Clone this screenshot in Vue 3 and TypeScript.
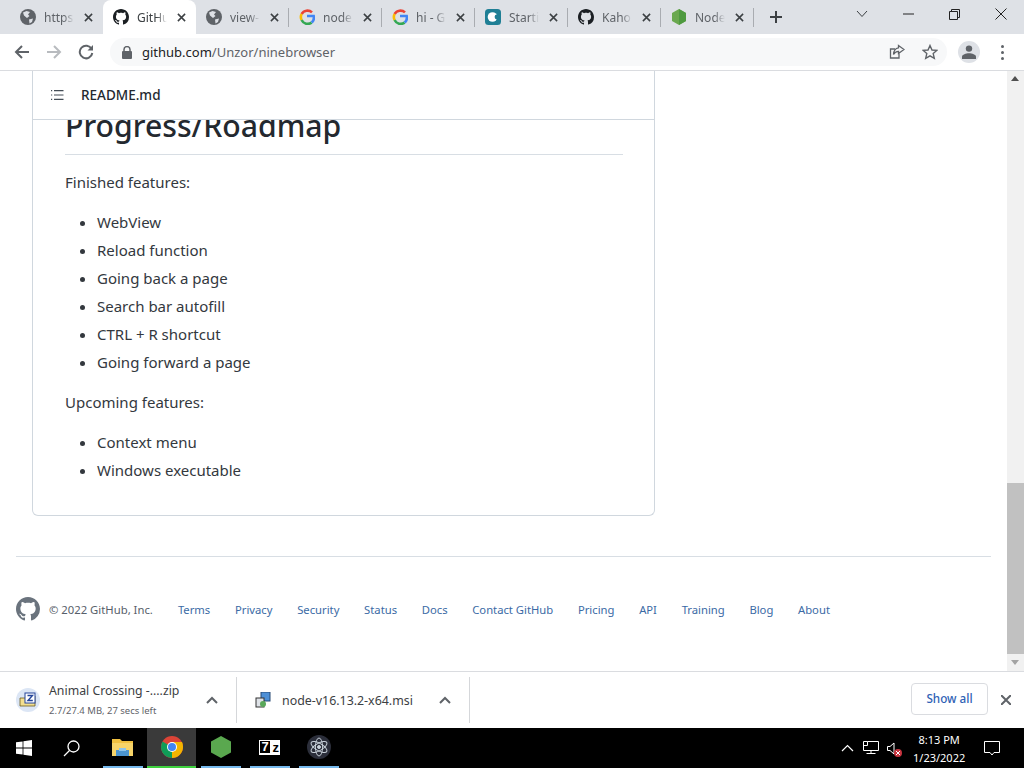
<script setup lang="ts">
type Tab = { icon: string; title: string; active?: boolean }

const tabs: Tab[] = [
  { icon: 'globe', title: 'https' },
  { icon: 'github', title: 'GitHu', active: true },
  { icon: 'globe', title: 'view-' },
  { icon: 'google', title: 'node' },
  { icon: 'google', title: 'hi - G' },
  { icon: 'cloud', title: 'Starti' },
  { icon: 'github', title: 'Kaho' },
  { icon: 'node', title: 'Node' },
]

const finished = ['WebView', 'Reload function', 'Going back a page', 'Search bar autofill', 'CTRL + R shortcut', 'Going forward a page']
const upcoming = ['Context menu', 'Windows executable']
const links = ['Terms', 'Privacy', 'Security', 'Status', 'Docs', 'Contact GitHub', 'Pricing', 'API', 'Training', 'Blog', 'About']
const githubMark = 'M8 0C3.58 0 0 3.58 0 8c0 3.54 2.29 6.53 5.47 7.59.4.07.55-.17.55-.38 0-.19-.01-.82-.01-1.49-2.01.37-2.53-.49-2.69-.94-.09-.23-.48-.94-.82-1.13-.28-.15-.68-.52-.01-.53.63-.01 1.08.58 1.23.82.72 1.21 1.87.87 2.33.66.07-.52.28-.87.51-1.07-1.78-.2-3.64-.89-3.64-3.95 0-.87.31-1.59.82-2.15-.08-.2-.36-1.02.08-2.12 0 0 .67-.21 2.2.82.64-.18 1.32-.27 2-.27.68 0 1.36.09 2 .27 1.53-1.04 2.2-.82 2.2-.82.44 1.1.16 1.92.08 2.12.51.56.82 1.27.82 2.15 0 3.07-1.87 3.75-3.65 3.95.29.25.54.73.54 1.48 0 1.07-.01 1.93-.01 2.2 0 .21.15.46.55.38A8.013 8.013 0 0016 8c0-4.42-3.58-8-8-8z'
</script>

<template>
  <div class="window">
    <div class="tabstrip">
      <div v-for="(t, i) in tabs" :key="i" class="tab" :class="{ active: t.active, sep: i >= 2 }">
        <svg v-if="t.icon === 'globe'" class="favicon" viewBox="0 0 16 16">
          <circle cx="8" cy="8" r="8" fill="#5f6368" />
          <path d="M3 3.5 6.5 2 10 3 8 5.5 9.5 7 7 9 4 6.5ZM9 10.5 13 9.5 12 13 9.5 14.5Z" fill="#dee1e6" />
        </svg>
        <svg v-else-if="t.icon === 'github'" class="favicon" viewBox="0 0 16 16"><path :d="githubMark" fill="#1b1f23" /></svg>
        <svg v-else-if="t.icon === 'google'" class="favicon" viewBox="0 0 16 16" fill="none" stroke-width="2.6">
          <path d="M13 3.4A6.7 6.7 0 0 0 2.6 5" stroke="#ea4335" />
          <path d="M2.6 5a6.7 6.7 0 0 0 0 6" stroke="#fbbc05" />
          <path d="M2.6 11a6.7 6.7 0 0 0 10 2.6" stroke="#34a853" />
          <path d="M12.6 13.6A6.7 6.7 0 0 0 14.7 7H8" stroke="#4285f4" />
        </svg>
        <svg v-else-if="t.icon === 'cloud'" class="favicon" viewBox="0 0 16 16">
          <rect width="16" height="16" rx="3.5" fill="#1f7f95" />
          <circle cx="7.5" cy="8" r="4.8" fill="#fff" />
          <circle cx="12" cy="8" r="2.4" fill="#1f7f95" />
        </svg>
        <svg v-else class="favicon" viewBox="0 0 16 16">
          <path d="M8 0 15 4V12L8 16 1 12V4Z" fill="#6aa84f" />
          <path d="M8 0 15 4V12L8 16Z" fill="#4e9a3f" />
        </svg>
        <span class="tab-title">{{ t.title }}</span>
        <svg class="tab-close" viewBox="0 0 10 10"><path d="M1 1 9 9M9 1 1 9" stroke="#3c4043" stroke-width="1.7" /></svg>
      </div>
      <div class="new-tab">
        <svg width="14" height="14" viewBox="0 0 14 14"><path d="M7 1V13M1 7H13" stroke="#3c4043" stroke-width="2" /></svg>
      </div>
      <div class="window-btns">
        <svg class="win-chevron" width="12" height="8" viewBox="0 0 12 8"><path d="M1 1 6 6.5 11 1" fill="none" stroke="#3c4043" /></svg>
        <svg class="win-min" width="11" height="2" viewBox="0 0 11 2"><path d="M0 1H11" stroke="#222" /></svg>
        <svg class="win-max" width="11" height="11" viewBox="0 0 11 11" fill="none" stroke="#222"><path d="M.5 2.5h8v8h-8zM2.5 2.5v-2h8v8h-2" /></svg>
        <svg class="win-close" width="12" height="12" viewBox="0 0 12 12"><path d="M.5.5 11.5 11.5M11.5.5.5 11.5" stroke="#222" /></svg>
      </div>
    </div>

    <div class="toolbar">
      <svg class="nav" viewBox="0 0 16 16"><path d="M15 8H2M8 2 2 8 8 14" fill="none" stroke="#5f6368" stroke-width="2" /></svg>
      <svg class="nav" viewBox="0 0 16 16"><path d="M1 8H14M8 2 14 8 8 14" fill="none" stroke="#b8bbbf" stroke-width="2" /></svg>
      <svg class="nav" viewBox="0 0 16 16"><path d="M13.6 5A6.3 6.3 0 1 0 14.3 9" fill="none" stroke="#5f6368" stroke-width="2" /><path d="M15 1V6.5H9.5Z" fill="#5f6368" /></svg>
      <div class="omnibox">
        <svg class="lock" width="10" height="13" viewBox="0 0 10 13"><path d="M2 5.5V3.6a3 3 0 0 1 6 0V5.5" fill="none" stroke="#5f6368" stroke-width="1.5" /><rect y="5" width="10" height="8" rx="1" fill="#5f6368" /></svg>
        <span class="url"><b>github.com</b>/Unzor/ninebrowser</span>
        <svg class="omni-icon" width="16" height="16" viewBox="0 0 16 16" fill="none" stroke="#5f6368" stroke-width="1.3"><path d="M10 9.5V14H1.5V5H6" /><path d="M9.5 1.5 15 5.5 9.5 9.5V7.3C7 7.3 5.5 8.5 4.5 10.5 4.7 7 6.5 4.2 9.5 3.8Z" /></svg>
        <svg class="omni-icon star" width="16" height="16" viewBox="0 0 16 16"><path d="M8 1.5 10 6 14.8 6.4 11.2 9.6 12.3 14.3 8 11.8 3.7 14.3 4.8 9.6 1.2 6.4 6 6Z" fill="none" stroke="#5f6368" stroke-width="1.4" /></svg>
      </div>
      <div class="avatar">
        <svg width="14" height="14" viewBox="0 0 14 14"><circle cx="7" cy="3.6" r="3.2" fill="#5f6368" /><path d="M0 14V11.5C0 9.5 4 8.2 7 8.2S14 9.5 14 11.5V14Z" fill="#5f6368" /></svg>
      </div>
      <div class="dots"><i></i><i></i><i></i></div>
    </div>

    <div class="viewport">
      <main class="page">
        <div class="readme">
          <div class="readme-head">
            <svg width="16" height="16" viewBox="0 0 16 16" fill="#444d56"><path d="M2 3h1.2v1.2H2zM2 7.4h1.2v1.2H2zM2 11.8h1.2V13H2zM5 3h9.5v1.2H5zM5 7.4h9.5v1.2H5zM5 11.8h9.5V13H5z" /></svg>
            <span>README.md</span>
          </div>
          <article class="markdown">
            <h2>Progress/Roadmap</h2>
            <p>Finished features:</p>
            <ul>
              <li v-for="item in finished" :key="item">{{ item }}</li>
            </ul>
            <p>Upcoming features:</p>
            <ul>
              <li v-for="item in upcoming" :key="item">{{ item }}</li>
            </ul>
          </article>
        </div>
        <footer class="footer">
          <svg width="24" height="24" viewBox="0 0 16 16"><path :d="githubMark" fill="#6a737d" /></svg>
          <span class="copy">© 2022 GitHub, Inc.</span>
          <nav class="links">
            <a v-for="l in links" :key="l">{{ l }}</a>
          </nav>
        </footer>
      </main>
      <div class="scrollbar">
        <div class="arrow up"></div>
        <div class="track"><div class="thumb"></div></div>
        <div class="arrow down"></div>
      </div>
    </div>

    <div class="shelf">
      <div class="download first">
        <span class="zip-icon">
          <svg width="24" height="24" viewBox="0 0 24 24">
            <circle cx="12" cy="12" r="12" fill="#dce6f5" />
            <path d="M4 10H10V8H19V18H4Z" fill="#f3df8f" stroke="#6b5a20" stroke-width=".8" />
            <rect x="9" y="5" width="10" height="10" fill="#fff" stroke="#24459a" />
            <path d="M11.5 7.5H16.5L12 12.5H16.8" fill="none" stroke="#24459a" stroke-width="1.4" />
          </svg>
        </span>
        <div class="dl-text">
          <div class="dl-name">Animal Crossing -....zip</div>
          <div class="dl-status">2.7/27.4 MB, 27 secs left</div>
        </div>
        <svg class="dl-chevron" width="12" height="8" viewBox="0 0 12 8"><path d="M1 7 6 2 11 7" fill="none" stroke="#5f6368" stroke-width="2" /></svg>
      </div>
      <div class="download second">
        <svg width="16" height="16" viewBox="0 0 16 16">
          <rect x="6" y="0" width="9" height="9" fill="#4d8fd6" stroke="#284a75" />
          <rect x="1" y="6" width="8" height="9" fill="#dfe3e8" stroke="#333" />
          <circle cx="8" cy="12" r="3" fill="#5aa85a" />
        </svg>
        <span class="dl-file">node-v16.13.2-x64.msi</span>
        <svg class="dl-chevron" width="12" height="8" viewBox="0 0 12 8"><path d="M1 7 6 2 11 7" fill="none" stroke="#5f6368" stroke-width="2" /></svg>
      </div>
      <button class="show-all">Show all</button>
      <svg class="shelf-close" width="10" height="10" viewBox="0 0 10 10"><path d="M0 0 10 10M10 0 0 10" stroke="#5f6368" stroke-width="2" /></svg>
    </div>

    <div class="taskbar">
      <div class="task start">
        <svg width="16" height="16" viewBox="0 0 16 16" fill="#fff"><path d="M0 2.3 6.6 1.4V7.6H0ZM7.4 1.3 16 0V7.6H7.4ZM0 8.4H6.6V14.6L0 13.7ZM7.4 8.4H16V16L7.4 14.7Z" /></svg>
      </div>
      <div class="task search">
        <svg width="17" height="17" viewBox="0 0 17 17" fill="none" stroke="#fff" stroke-width="1.3"><circle cx="10.5" cy="6.5" r="5.5" /><path d="M6.5 10.5 1 16" /></svg>
      </div>
      <div class="task pin">
        <svg width="21" height="18" viewBox="0 0 21 18">
          <path d="M0 1H8L10 3H21V18H0Z" fill="#f0c040" />
          <rect y="5" width="21" height="13" fill="#f7d469" />
          <rect x="4" y="12" width="13" height="6" fill="#4b94cf" />
          <rect x="7" y="10" width="7" height="3" fill="#8fc4ea" />
        </svg>
      </div>
      <div class="task pin chrome">
        <svg width="22" height="22" viewBox="0 0 22 22">
          <circle cx="11" cy="11" r="11" fill="#db4437" />
          <path d="M11 11 1.5 5.5A11 11 0 0 0 11 22Z" fill="#0f9d58" />
          <path d="M11 11H22A11 11 0 0 1 11 22Z" fill="#f4b400" />
          <path d="M11 6H21A11 11 0 0 1 22 11H11Z" fill="#f4b400" />
          <circle cx="11" cy="11" r="5" fill="#fff" />
          <circle cx="11" cy="11" r="4" fill="#4285f4" />
        </svg>
      </div>
      <div class="task pin">
        <svg width="20" height="22" viewBox="0 0 20 22"><path d="M10 0 20 5.5V16.5L10 22 0 16.5V5.5Z" fill="#5aa84f" /></svg>
      </div>
      <div class="task pin">
        <div class="sevenz"><b class="seven">7</b><b>z</b></div>
      </div>
      <div class="task pin">
        <svg width="24" height="24" viewBox="0 0 24 24" fill="none" stroke="#c7d0d8">
          <circle cx="12" cy="12" r="12" fill="#2b2e3a" stroke="none" />
          <ellipse cx="12" cy="12" rx="9" ry="3.6" transform="rotate(30 12 12)" />
          <ellipse cx="12" cy="12" rx="9" ry="3.6" transform="rotate(90 12 12)" />
          <ellipse cx="12" cy="12" rx="9" ry="3.6" transform="rotate(150 12 12)" />
          <circle cx="12" cy="12" r="1.5" fill="#c7d0d8" />
        </svg>
      </div>
      <div class="tray">
        <svg width="13" height="8" viewBox="0 0 13 8"><path d="M1 7 6.5 1.5 12 7" fill="none" stroke="#fff" stroke-width="1.2" /></svg>
        <svg class="tray-net" width="16" height="14" viewBox="0 0 16 14" fill="none" stroke="#fff"><path d="M4.5.5h11v9H.5v-9h4v4h-4M8 9.5v3M3.5 12.5h9" /></svg>
        <span class="sound">
          <svg width="10" height="13" viewBox="0 0 10 13" fill="none" stroke="#fff"><path d="M.5 4.5h2.5l4-3.5v11l-4-3.5h-2.500z" /></svg>
          <svg class="muted" width="8" height="8" viewBox="0 0 8 8"><circle cx="4" cy="4" r="4" fill="#c8343f" /><path d="M2 2 6 6M6 2 2 6" stroke="#fff" /></svg>
        </span>
        <div class="clock"><div>8:13 PM</div><div>1/23/2022</div></div>
        <svg class="notify" width="16" height="15" viewBox="0 0 16 15" fill="none" stroke="#fff"><path d="M.5.5h15v11H10L8 14 6 11.5H.5z" /></svg>
      </div>
    </div>
  </div>
</template>

<style scoped>
.window {
  width: 1024px; height: 768px; overflow: hidden;
  display: flex; flex-direction: column;
  font-family: "Noto Sans", "Open Sans", sans-serif;
  background: #fff; color: #24292f;
}

.tabstrip { height: 34px; flex: none; display: flex; align-items: center; background: #dee1e6; padding-left: 10px; }
.tab { position: relative; width: 93px; height: 34px; flex: none; box-sizing: border-box; padding: 0 0 0 10px; display: flex; align-items: center; font-size: 12px; color: #5f6368; }
.tab.active { background: #fff; color: #3c4043; border-radius: 8px 8px 0 0; }
.tab.sep::after { content: ""; position: absolute; right: 0; top: 8px; width: 1px; height: 19px; background: #a9acb1; }
.favicon { width: 16px; height: 16px; flex: none; }
.tab-title { margin-left: 8px; width: 30px; flex: none; white-space: nowrap; -webkit-mask-image: linear-gradient(90deg, #000 65%, transparent); mask-image: linear-gradient(90deg, #000 65%, transparent); }
.tab-close { width: 9px; height: 9px; margin-left: 10px; flex: none; }
.new-tab { width: 29px; height: 34px; display: flex; align-items: center; justify-content: flex-end; flex: none; }
.window-btns { margin-left: auto; margin-right: 4px; align-self: flex-start; width: 190px; height: 28px; display: flex; align-items: center; }
.win-chevron { margin-left: 26px; }
.win-min { margin-left: 35px; }
.win-max { margin-left: 35px; }
.win-close { margin-left: 35px; }

.toolbar { height: 37px; flex: none; box-sizing: border-box; display: flex; align-items: center; padding-left: 14px; background: #fff; border-bottom: 1px solid #dadce0; }
.nav { width: 16px; height: 16px; flex: none; margin-right: 16px; }
.omnibox { width: 837px; height: 28px; flex: none; box-sizing: border-box; display: flex; align-items: center; padding: 0 9px 0 12px; border-radius: 14px; background: #f7f8f9; }
.lock { margin-right: 10px; flex: none; }
.url { font-size: 13px; color: #5f6368; flex: 1; }
.url b { font-weight: 400; color: #202124; }
.omni-icon { flex: none; margin-left: 17px; }
.avatar { width: 22px; height: 22px; margin-left: 11px; border-radius: 50%; background: #dee1e6; display: flex; align-items: center; justify-content: center; flex: none; }
.dots { margin-left: 21px; display: flex; flex-direction: column; gap: 3px; }
.dots i { width: 3px; height: 3px; border-radius: 50%; background: #5f6368; }

.viewport { flex: 1; min-height: 0; display: flex; overflow: hidden; }
.page { width: 1007px; flex: none; box-sizing: border-box; padding: 0 16px; }
.readme { width: 623px; box-sizing: border-box; margin-left: 16px; height: 445px; border: 1px solid #d0d7de; border-top: 0; border-radius: 0 0 6px 6px; }
.readme-head { position: relative; z-index: 1; height: 49px; box-sizing: border-box; display: flex; align-items: center; gap: 16px; padding-left: 16px; background: #fff; border-bottom: 1px solid #d0d7de; font-size: 13.5px; font-weight: 500; color: #24292f; }
.markdown { padding: 0 32px; margin-right: -1px; color: #33383e; }
.markdown h2 { margin: -14px 0 0; height: 49px; box-sizing: border-box; border-bottom: 1px solid #d8dee4; font-size: 30.2px; line-height: 40px; font-weight: 500; color: #24292f; }
.markdown p { margin: 16px 0 0; font-size: 15px; line-height: 24px; }
.markdown h2 + p { margin-top: 15px; }
.markdown ul { margin: 16px 0 0; padding-left: 32px; font-size: 15px; }
.markdown li { line-height: 24px; margin-top: 4px; }
.markdown li:first-child { margin-top: 0; }

.footer { margin-top: 40px; padding-top: 40px; border-top: 1px solid #d8dee4; display: flex; align-items: center; height: 24px; width: 975px; }
.copy { margin-left: 9px; font-size: 11.3px; color: #57606a; white-space: nowrap; }
.links { margin-left: 25px; display: flex; gap: 24.7px; font-size: 11.25px; color: #3b6aa5; white-space: nowrap; }

.scrollbar { width: 17px; flex: none; background: #f1f1f1; display: flex; flex-direction: column; }
.arrow { height: 17px; flex: none; position: relative; }
.arrow::after { content: ""; position: absolute; left: 4px; border-left: 4px solid transparent; border-right: 4px solid transparent; }
.arrow.up::after { top: 5px; border-bottom: 5px solid #505050; }
.arrow.down::after { top: 6px; border-top: 5px solid #a3a3a3; }
.track { flex: 1; display: flex; flex-direction: column; justify-content: flex-end; }
.thumb { height: 171px; background: #c1c1c1; }

.shelf { height: 57px; flex: none; box-sizing: border-box; display: flex; align-items: center; background: #fff; border-top: 1px solid #dadce0; }
.download { height: 46px; flex: none; box-sizing: border-box; display: flex; align-items: center; border-right: 1px solid #d5d7da; position: relative; }
.download.first { width: 237px; padding-left: 16px; }
.download.second { width: 233px; padding-left: 18px; }
.zip-icon { display: flex; margin-right: 9px; }
.dl-name { font-size: 12.3px; color: #3c4043; line-height: 17px; }
.dl-status { font-size: 9.5px; color: #5f6368; line-height: 15px; margin-top: 4px; }
.dl-file { margin-left: 11px; font-size: 12.4px; color: #3c4043; }
.dl-chevron { position: absolute; right: 18px; top: 19px; }
.show-all { margin: -2px 0 0 441px; width: 77px; height: 32px; padding: 0 0 2px; background: #fff; border: 1px solid #dadce0; border-radius: 4px; font: 500 11.7px "Noto Sans", sans-serif; color: #2f62b5; }
.shelf-close { margin-left: 13px; }

.taskbar { height: 40px; flex: none; display: flex; background: #000; }
.task { height: 40px; display: flex; align-items: center; justify-content: center; flex: none; box-sizing: border-box; }
.start { width: 48px; }
.search { width: 50px; justify-content: flex-start; padding-left: 15px; }
.pin { width: 49px; padding: 0 0 2px; position: relative; }
.pin::after { content: ""; position: absolute; left: 5px; right: 4px; bottom: 0; height: 2px; background: #76b9ed; }
.chrome { background: #3a3a3a; }
.chrome::after { left: 0; right: 0; background: #3fd23f; }
.sevenz { width: 21px; height: 15px; background: #fff; display: flex; justify-content: space-between; align-items: center; font: 700 13px "Liberation Sans", sans-serif; color: #000; padding: 0 1px; box-sizing: border-box; }
.seven { background: #000; color: #fff; width: 10px; height: 12px; line-height: 12px; text-align: center; }

.tray { margin-left: auto; width: 183.5px; box-sizing: border-box; display: flex; align-items: center; color: #fff; }
.tray-net { margin-left: 9px; }
.sound { position: relative; margin-left: 8px; display: flex; }
.muted { position: absolute; left: 7px; top: 7px; }
.clock { margin: 2px 0 0 16.5px; font-size: 11px; line-height: 18px; text-align: center; white-space: nowrap; }
.notify { margin-left: 18.5px; }
</style>
